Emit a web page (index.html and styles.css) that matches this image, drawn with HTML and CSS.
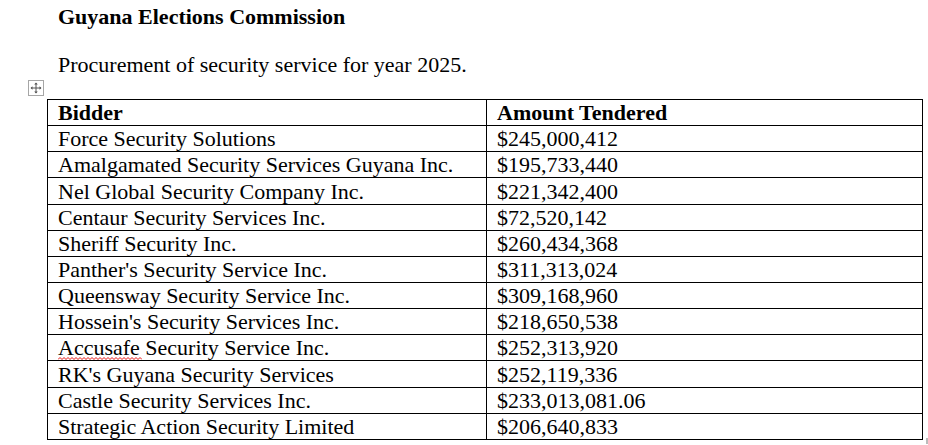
FILE: index.html
```html
<!DOCTYPE html>
<html>
<head>
<meta charset="utf-8">
<link rel="stylesheet" href="styles.css">
</head>
<body>
<div class="page">
  <p class="title">Guyana Elections Commission</p>
  <p class="subtitle">Procurement of security service for year 2025.</p>
  <div class="table-wrap">
    <span class="move-handle">
      <svg width="12" height="12" viewBox="0 0 12 12">
        <path d="M6 1v10M1 6h10" stroke="#555" stroke-width="1" fill="none"/>
        <path d="M6 0.5l-1.8 2h3.6zM6 11.5l-1.8-2h3.6zM0.5 6l2-1.8v3.6zM11.5 6l-2-1.8v3.6z" fill="#555"/>
      </svg>
    </span>
    <table class="bids">
      <tr><th>Bidder</th><th>Amount Tendered</th></tr>
      <tr><td>Force Security Solutions</td><td>$245,000,412</td></tr>
      <tr><td>Amalgamated Security Services Guyana Inc.</td><td>$195,733,440</td></tr>
      <tr><td>Nel Global Security Company Inc.</td><td>$221,342,400</td></tr>
      <tr><td>Centaur Security Services Inc.</td><td>$72,520,142</td></tr>
      <tr><td>Sheriff Security Inc.</td><td>$260,434,368</td></tr>
      <tr><td>Panther's Security Service Inc.</td><td>$311,313,024</td></tr>
      <tr><td>Queensway Security Service Inc.</td><td>$309,168,960</td></tr>
      <tr><td>Hossein's Security Services Inc.</td><td>$218,650,538</td></tr>
      <tr><td><span class="misspelled">Accusafe<svg class="squiggle" width="84" height="3" viewBox="0 0 84 3"><polyline points="0,2.5 2,0.5 4,2.5 6,0.5 8,2.5 10,0.5 12,2.5 14,0.5 16,2.5 18,0.5 20,2.5 22,0.5 24,2.5 26,0.5 28,2.5 30,0.5 32,2.5 34,0.5 36,2.5 38,0.5 40,2.5 42,0.5 44,2.5 46,0.5 48,2.5 50,0.5 52,2.5 54,0.5 56,2.5 58,0.5 60,2.5 62,0.5 64,2.5 66,0.5 68,2.5 70,0.5 72,2.5 74,0.5 76,2.5 78,0.5 80,2.5 82,0.5 84,2.5" fill="none" stroke="#e81010" stroke-width="1"/></svg></span> Security Service Inc.</td><td>$252,313,920</td></tr>
      <tr><td>RK's Guyana Security Services</td><td>$252,119,336</td></tr>
      <tr><td>Castle Security Services Inc.</td><td>$233,013,081.06</td></tr>
      <tr><td>Strategic Action Security Limited</td><td>$206,640,833</td></tr>
    </table>
    <span class="row-end"></span>
  </div>
</div>
</body>
</html>
```
FILE: styles.css
```css
html, body {
  margin: 0;
  padding: 0;
  background: #fff;
}
body {
  font-family: "Liberation Serif", "Times New Roman", serif;
  color: #000;
  width: 928px;
  height: 445px;
  overflow: hidden;
}
.page {
  padding: 0 0 0 58px;
}
.title {
  margin: 0;
  padding-top: 5px;
  font-size: 22px;
  font-weight: bold;
  line-height: 24px;
}
.subtitle {
  margin: 0;
  padding-top: 24px;
  font-size: 22px;
  line-height: 24px;
}
.table-wrap {
  position: relative;
  margin-left: -11px;
  margin-top: 22px;
  width: 876px;
}
.move-handle {
  position: absolute;
  left: -19px;
  top: -19px;
  width: 14px;
  height: 14px;
  border: 1px solid #a6a6a6;
  background: #fff;
  display: flex;
  align-items: center;
  justify-content: center;
}
.bids {
  border-collapse: collapse;
  width: 876px;
  table-layout: fixed;
  font-size: 22px;
}
.bids th, .bids td {
  border: 1px solid #000;
  height: 25.15px;
  padding: 0 0 0 10px;
  line-height: 25px;
  text-align: left;
  vertical-align: bottom;
  white-space: nowrap;
}
.bids th:first-child, .bids td:first-child {
  width: 428px;
}
.bids th {
  font-weight: bold;
}
.misspelled {
  position: relative;
}
.squiggle {
  position: absolute;
  left: 0;
  top: calc(100% - 3px);
  display: block;
}
.row-end {
  position: absolute;
  right: -5px;
  bottom: -4px;
  width: 2px;
  height: 6px;
  background: #bbb;
}
```
